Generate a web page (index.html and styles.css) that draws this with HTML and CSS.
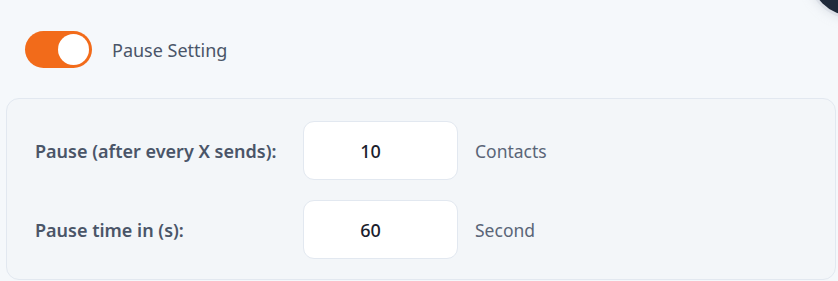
FILE: index.html
```html
<!DOCTYPE html>
<html>
<head>
<meta charset="utf-8">
<link rel="stylesheet" href="styles.css">
</head>
<body>
<div class="page">
  <div class="avatar"></div>
  <div class="header">
    <div class="toggle"><div class="knob"></div></div>
    <span class="title">Pause Setting</span>
  </div>
  <div class="panel">
    <div class="row">
      <span class="label">Pause (after every X sends):</span>
      <div class="input">10</div>
      <span class="unit">Contacts</span>
    </div>
    <div class="row">
      <span class="label">Pause time in (s):</span>
      <div class="input">60</div>
      <span class="unit">Second</span>
    </div>
  </div>
</div>
</body>
</html>
```
FILE: styles.css
```css
html, body {
  margin: 0;
  padding: 0;
}
body {
  background: #f5f8fb;
  font-family: "Noto Sans", "Open Sans", sans-serif;
  width: 838px;
  height: 281px;
  overflow: hidden;
}
.page {
  position: relative;
  width: 838px;
  height: 281px;
  overflow: hidden;
}
.avatar {
  position: absolute;
  left: 810px;
  top: -70px;
  width: 86px;
  height: 86px;
  border-radius: 50%;
  background: #1f2a3a;
  box-shadow: 0 0 0 3px #dde1e8, 0 0 8px 4px rgba(205, 211, 220, 0.5);
}
.header {
  display: flex;
  align-items: center;
  gap: 20px;
  padding: 31px 0 0 25px;
  height: 37px;
}
.toggle {
  width: 67px;
  height: 37px;
  border-radius: 19px;
  background: #f26b1a;
  box-sizing: border-box;
  padding: 3px 3px 3px 0;
  display: flex;
  justify-content: flex-end;
}
.knob {
  width: 31px;
  height: 31px;
  border-radius: 50%;
  background: #ffffff;
}
.title {
  font-size: 18px;
  color: #4a5568;
}
.panel {
  margin: 30px 2px 0 6px;
  height: 182px;
  box-sizing: border-box;
  border: 1px solid #e2e8f0;
  border-radius: 13px;
  background: #f3f6f9;
  padding: 22px 0 0 28px;
  display: flex;
  flex-direction: column;
  gap: 20px;
}
.row {
  display: flex;
  align-items: center;
}
.label {
  width: 268px;
  font-size: 18px;
  font-weight: 600;
  color: #4a5568;
}
.input {
  width: 155px;
  height: 59px;
  box-sizing: border-box;
  border: 1.5px solid #e2e8f0;
  border-radius: 11px;
  background: #ffffff;
  display: flex;
  align-items: center;
  justify-content: center;
  padding-right: 20px;
  font-size: 18px;
  font-weight: 500;
  color: #1a202c;
}
.unit {
  margin-left: 17px;
  font-size: 17.5px;
  color: #5a6577;
}
```
